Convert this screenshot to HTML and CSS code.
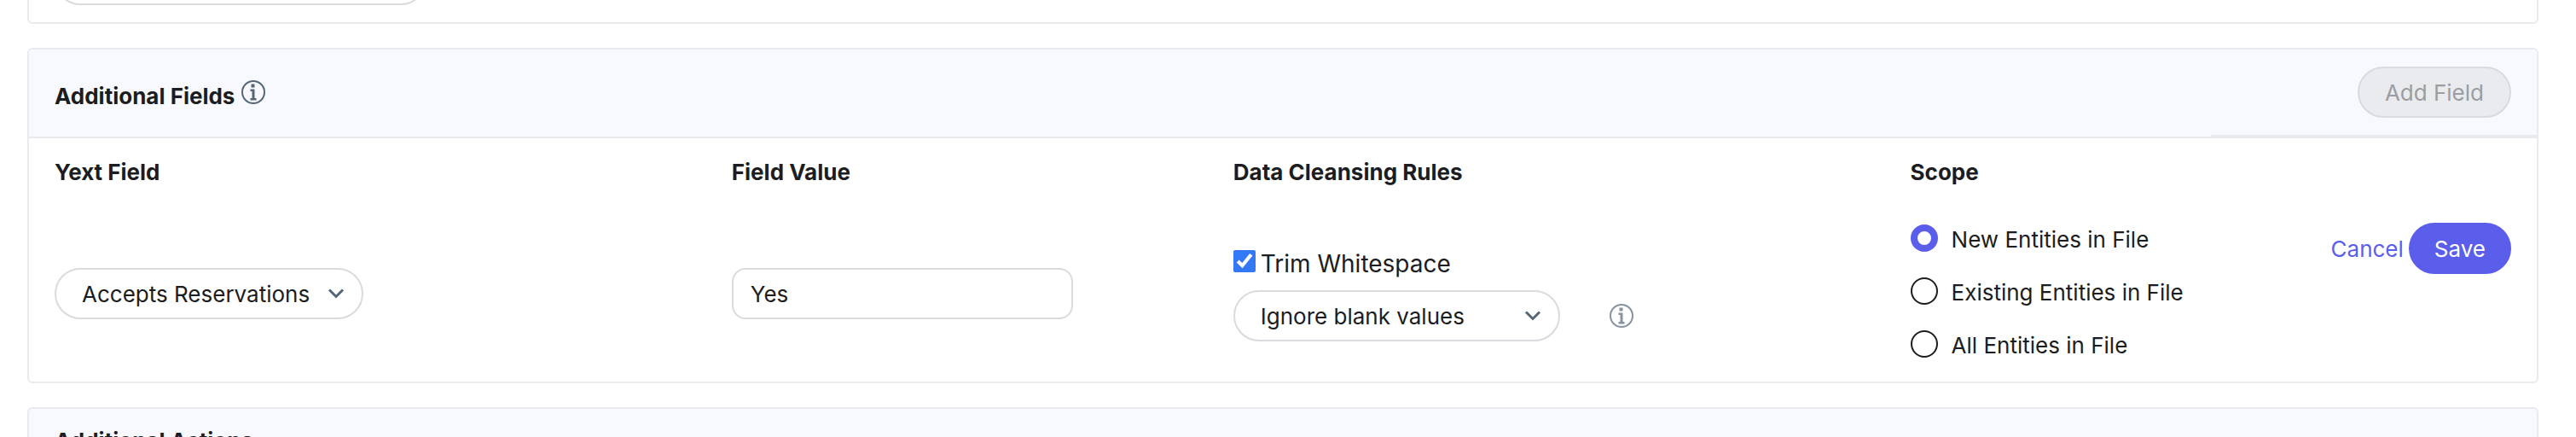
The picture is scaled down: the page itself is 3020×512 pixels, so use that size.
FILE: index.html
```html
<!DOCTYPE html>
<html lang="en">
<head>
    <meta charset="UTF-8">
    <meta name="viewport" content="width=device-width, initial-scale=1.0">
    <title>Additional Fields</title>
    <link rel="stylesheet" href="styles.css">
</head>
<body>

<main class="page">
    <section class="panel panel-previous">
        <div class="select-wrap select-large">
            <select class="select" aria-label="Option"><option></option></select>
        </div>
    </section>

    <section class="panel">
        <header class="panel-header">
            <h2 class="panel-title with-info">
                Additional Fields
                <svg class="info-icon" viewBox="0 0 28 28" aria-hidden="true">
                    <circle cx="14" cy="14" r="13"/>
                    <path d="M11.5 4.5h4v4h-4zM10.5 10.5h5v10.5h2v2.5h-7v-2.5h2v-8h-2z"/>
                </svg>
            </h2>
            <div class="panel-actions">
                <button type="button" class="btn btn-disabled" disabled>Add Field</button>
            </div>
        </header>

        <table class="fields">
            <colgroup>
                <col class="col-field">
                <col class="col-value">
                <col class="col-rules">
                <col class="col-scope">
                <col class="col-actions">
            </colgroup>
            <thead>
                <tr>
                    <th>Yext Field</th>
                    <th>Field Value</th>
                    <th>Data Cleansing Rules</th>
                    <th>Scope</th>
                    <th></th>
                </tr>
            </thead>
            <tbody>
                <tr>
                    <td>
                        <div class="select-wrap">
                            <select class="select" aria-label="Yext Field">
                                <option>Accepts Reservations</option>
                            </select>
                            <svg class="chevron" viewBox="0 0 20 12" aria-hidden="true"><path d="M2 1.5l8 8 8-8"/></svg>
                        </div>
                    </td>
                    <td>
                        <input type="text" class="text-input" value="Yes" aria-label="Field Value">
                    </td>
                    <td>
                        <div class="rules">
                            <label class="check"><input type="checkbox" class="checkbox" checked>Trim Whitespace</label>
                            <div class="rule-row">
                                <div class="select-wrap select-blank">
                                    <select class="select" aria-label="Blank values">
                                        <option>Ignore blank values</option>
                                    </select>
                                    <svg class="chevron" viewBox="0 0 20 12" aria-hidden="true"><path d="M2 1.5l8 8 8-8"/></svg>
                                </div>
                                <svg class="info-icon info-light" viewBox="0 0 28 28" aria-hidden="true">
                                    <circle cx="14" cy="14" r="13"/>
                                    <path d="M11.5 4.5h4v4h-4zM10.5 10.5h5v10.5h2v2.5h-7v-2.5h2v-8h-2z"/>
                                </svg>
                            </div>
                        </div>
                    </td>
                    <td class="scope-cell">
                        <div class="scope">
                            <label class="radio-label"><input type="radio" class="radio" name="scope" checked>New Entities in File</label>
                            <label class="radio-label"><input type="radio" class="radio" name="scope">Existing Entities in File</label>
                            <label class="radio-label"><input type="radio" class="radio" name="scope">All Entities in File</label>
                        </div>
                    </td>
                    <td class="actions-cell">
                        <div class="row-actions">
                            <a href="#" class="cancel">Cancel</a>
                            <button type="button" class="btn btn-primary">Save</button>
                        </div>
                    </td>
                </tr>
            </tbody>
        </table>
    </section>

    <section class="panel">
        <header class="panel-header">
            <h2 class="panel-title">Additional Actions</h2>
        </header>
    </section>
</main>

</body>
</html>
```

FILE: styles.css
```css
* {
    box-sizing: border-box;
}

body {
    margin: 0;
    height: 100vh;
    overflow: hidden;
    background: #fff;
    color: #1c1d21;
    font-family: Inter, "Liberation Sans", sans-serif;
    font-size: 26px;
    line-height: 39px;
}

/* the page is scrolled part of the way down */
.page {
    display: flex;
    flex-direction: column;
    gap: 28px;
    margin-top: -76px;
    padding: 0 44px 0 32px;
}

.panel {
    border: 2px solid #e9e9ee;
    border-radius: 6px;
    overflow: hidden;
}

.panel-previous {
    padding: 20px 30px;
}

.panel-header {
    display: flex;
    justify-content: space-between;
    align-items: center;
    background: #f8f9fe;
    border-bottom: 2px solid #e9e9ee;
}

.panel-title {
    display: flex;
    align-items: baseline;
    gap: 8px;
    margin: 0;
    padding: 18px 30px;
    font-size: 26px;
    font-weight: 700;
}

.with-info {
    padding-top: 24px;
}

.panel-actions {
    display: flex;
    justify-content: flex-end;
    width: 13%;
    padding: 20px 30px;
    border-bottom: 2px solid #e9e9ee;
}

/* icons */
.info-icon {
    flex: none;
    width: 28px;
    height: 28px;
    fill: #556677;
}

.info-icon circle {
    fill: none;
    stroke: #556677;
    stroke-width: 2;
}

.info-light {
    opacity: 0.7;
}

.chevron {
    position: absolute;
    right: 22px;
    top: 24px;
    width: 20px;
    height: 12px;
    fill: none;
    stroke: #556677;
    stroke-width: 3;
    pointer-events: none;
}

/* buttons */
.btn {
    height: 60px;
    padding: 0 30px;
    border: 2px solid transparent;
    border-radius: 30px;
    font: inherit;
    white-space: nowrap;
}

.btn-disabled {
    background: #eaebef;
    border-color: #dadade;
    color: #9c9da1;
}

.btn-primary {
    padding: 0 28px;
    background: #5b5deb;
    border-color: #5b5deb;
    color: #fff;
}

.cancel {
    color: #5b5deb;
    text-decoration: none;
}

/* fields table */
.fields {
    width: 100%;
    table-layout: fixed;
    border-collapse: collapse;
}

.col-field,
.col-rules {
    width: 27%;
}

.col-value {
    width: 20%;
}

.col-scope,
.col-actions {
    width: 13%;
}

.fields th,
.fields td {
    padding: 20px 0 20px 30px;
    text-align: left;
    vertical-align: middle;
}

.fields .scope-cell,
.fields .actions-cell {
    vertical-align: top;
}

.fields .actions-cell {
    padding-right: 30px;
}

.select-wrap {
    position: relative;
    width: fit-content;
}

.select {
    display: block;
    width: 100%;
    height: 60px;
    padding: 0 60px 0 30px;
    border: 2px solid #dadadf;
    border-radius: 30px;
    appearance: none;
    background: #fff;
    color: inherit;
    font: inherit;
}

.select-large {
    width: 436px;
}

.select-blank {
    width: 383px;
}

.text-input {
    display: block;
    width: 400px;
    height: 60px;
    padding: 0 20px;
    border: 2px solid #dadadf;
    border-radius: 16px;
    color: inherit;
    font: inherit;
}

.rules {
    display: flex;
    flex-direction: column;
    gap: 10px;
}

.check {
    display: flex;
    align-items: center;
    gap: 6px;
    font-size: 28px;
    line-height: 42px;
}

.checkbox {
    width: 26px;
    height: 26px;
    margin: 0 0 6px;
    accent-color: #3378f6;
}

.rule-row {
    display: flex;
    align-items: center;
    gap: 58px;
}

.scope {
    display: flex;
    flex-direction: column;
    gap: 20px;
}

.radio-label {
    display: flex;
    align-items: flex-start;
    gap: 16px;
    padding-bottom: 3px;
    white-space: nowrap;
}

.radio {
    flex: none;
    appearance: none;
    width: 32px;
    height: 32px;
    margin: 2px 0 0;
    border: 2px solid #1c1d21;
    border-radius: 50%;
}

.radio:checked {
    border: 8px solid #5b5deb;
}

.row-actions {
    display: flex;
    justify-content: flex-end;
    align-items: center;
    gap: 6px;
}
```
